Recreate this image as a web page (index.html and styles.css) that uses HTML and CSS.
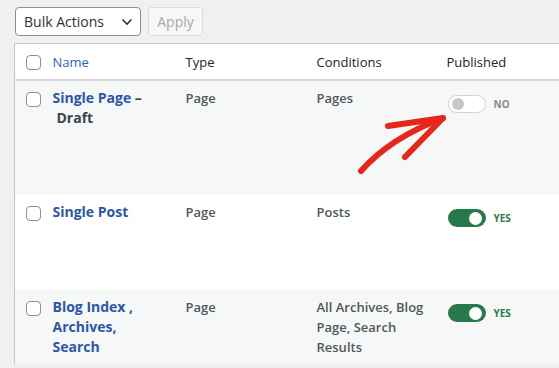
FILE: index.html
```html
<!DOCTYPE html>
<html>
<head>
<meta charset="utf-8">
<link rel="stylesheet" href="styles.css">
</head>
<body>
<div class="wrap">
  <div class="tablenav">
    <div class="select">
      <span>Bulk Actions</span>
      <svg class="chev" width="12" height="8" viewBox="0 0 12 8"><path d="M1.5 1.5 L6 6 L10.5 1.5" fill="none" stroke="#2c3338" stroke-width="1.6"/></svg>
    </div>
    <div class="btn">Apply</div>
  </div>
  <table class="list">
    <colgroup>
      <col class="c-cb"><col class="c-name"><col class="c-type"><col class="c-cond"><col class="c-pub">
    </colgroup>
    <thead>
      <tr>
        <th class="cb"><span class="check"></span></th>
        <th><a class="sort">Name</a></th>
        <th>Type</th>
        <th>Conditions</th>
        <th>Published</th>
      </tr>
    </thead>
    <tbody>
      <tr class="alt r1">
        <td class="cb"><span class="check"></span></td>
        <td class="name"><a>Single Page</a> – <span class="state">Draft</span></td>
        <td class="meta">Page</td>
        <td class="meta">Pages</td>
        <td><div class="pub"><span class="toggle off"><span class="knob"></span></span><span class="lbl no">NO</span></div></td>
      </tr>
      <tr class="r2">
        <td class="cb"><span class="check"></span></td>
        <td class="name"><a>Single Post</a></td>
        <td class="meta">Page</td>
        <td class="meta">Posts</td>
        <td><div class="pub"><span class="toggle on"><span class="knob"></span></span><span class="lbl yes">YES</span></div></td>
      </tr>
      <tr class="alt r3">
        <td class="cb"><span class="check"></span></td>
        <td class="name"><a>Blog Index , Archives, Search</a></td>
        <td class="meta">Page</td>
        <td class="meta">All Archives, Blog Page, Search Results</td>
        <td><div class="pub"><span class="toggle on"><span class="knob"></span></span><span class="lbl yes">YES</span></div></td>
      </tr>
    </tbody>
  </table>
</div>
<svg class="arrow" width="559" height="368" viewBox="0 0 559 368">
  <path d="M361 171 Q 390 138 443 118" fill="none" stroke="#e6261b" stroke-width="6" stroke-linecap="round"/>
  <path d="M388 126 L443 118 L405 157" fill="none" stroke="#e6261b" stroke-width="6" stroke-linecap="round" stroke-linejoin="round"/>
</svg>
</body>
</html>
```

FILE: styles.css
```css
html, body {
  margin: 0;
  padding: 0;
  background: #f0f0f1;
  font-family: "Open Sans", "Liberation Sans", sans-serif;
  overflow: hidden;
  width: 559px;
  height: 368px;
}
.wrap {
  padding: 7px 0 0 14px;
}
.tablenav {
  display: flex;
  gap: 7px;
  margin-left: 1px;
  height: 29px;
}
.select {
  box-sizing: border-box;
  width: 126px;
  height: 29px;
  border: 1px solid #8c8f94;
  border-radius: 4px;
  background: #fff;
  display: flex;
  align-items: center;
  justify-content: space-between;
  padding: 0 7px 0 8px;
  font-size: 14px;
  color: #2c3338;
}
.chev { margin-top: 1px; }
.btn {
  box-sizing: border-box;
  width: 55px;
  height: 29px;
  border: 1px solid #dcdcde;
  border-radius: 3px;
  background: #f6f7f7;
  color: #a7aaad;
  font-size: 14px;
  display: flex;
  align-items: center;
  justify-content: center;
}
.list {
  margin-top: 7px;
  width: 620px;
  border-collapse: collapse;
  table-layout: fixed;
  background: #fff;
  border-top: 1px solid #c3c4c7;
  border-left: 1px solid #c3c4c7;
}
.c-cb { width: 28px; }
.c-name { width: 133px; }
.c-type { width: 131px; }
.c-cond { width: 130px; }
.list th, .list td {
  text-align: left;
  vertical-align: top;
  padding: 7px 10px;
  line-height: 20px;
  font-size: 13px;
}
.list th {
  padding-top: 8px;
  font-weight: 400;
  color: #1d2327;
  height: 20px;
  border-bottom: 2px solid #d5d6d8;
}
.list .cb {
  padding: 8px 0 0 11px;
}
.list th.cb { padding-top: 11px; }
.list td.cb { padding-top: 11px; }
.check {
  display: block;
  box-sizing: border-box;
  width: 15px;
  height: 15px;
  border: 1px solid #8c8f94;
  border-radius: 4px;
  background: #fff;
}
.sort { color: #2e64b5; }
.alt { background: #f6f7f7; }
.r1 { height: 115px; }
.r2 { height: 95px; }
.name {
  font-weight: 700;
  font-size: 14px !important;
  color: #3c434a;
}
.name a { color: #2b58a6; }
.state { margin-left: 4px; }
.meta {
  font-weight: 600;
  color: #50575e;
}
.pub {
  display: flex;
  align-items: center;
  gap: 8px;
  margin-top: 7px;
  margin-left: 1px;
}
.toggle {
  box-sizing: border-box;
  position: relative;
  width: 38px;
  height: 18px;
  border-radius: 9px;
  display: block;
}
.toggle.off {
  background: #fff;
  border: 1px solid #d4cfd4;
}
.toggle.on {
  background: #27794b;
}
.knob {
  position: absolute;
  top: 2px;
  width: 13px;
  height: 13px;
  border-radius: 50%;
}
.off .knob { left: 3px; top: 2px; width: 12px; height: 12px; background: #cbc4cc; }
.on .knob { right: 4px; top: 2.5px; background: #fff; }
.lbl {
  font-size: 10px;
  font-weight: 700;
  line-height: 18px;
}
.no { color: #8e8a90; }
.yes { color: #27794b; }
.arrow {
  position: absolute;
  left: 0;
  top: 0;
  pointer-events: none;
}
```
